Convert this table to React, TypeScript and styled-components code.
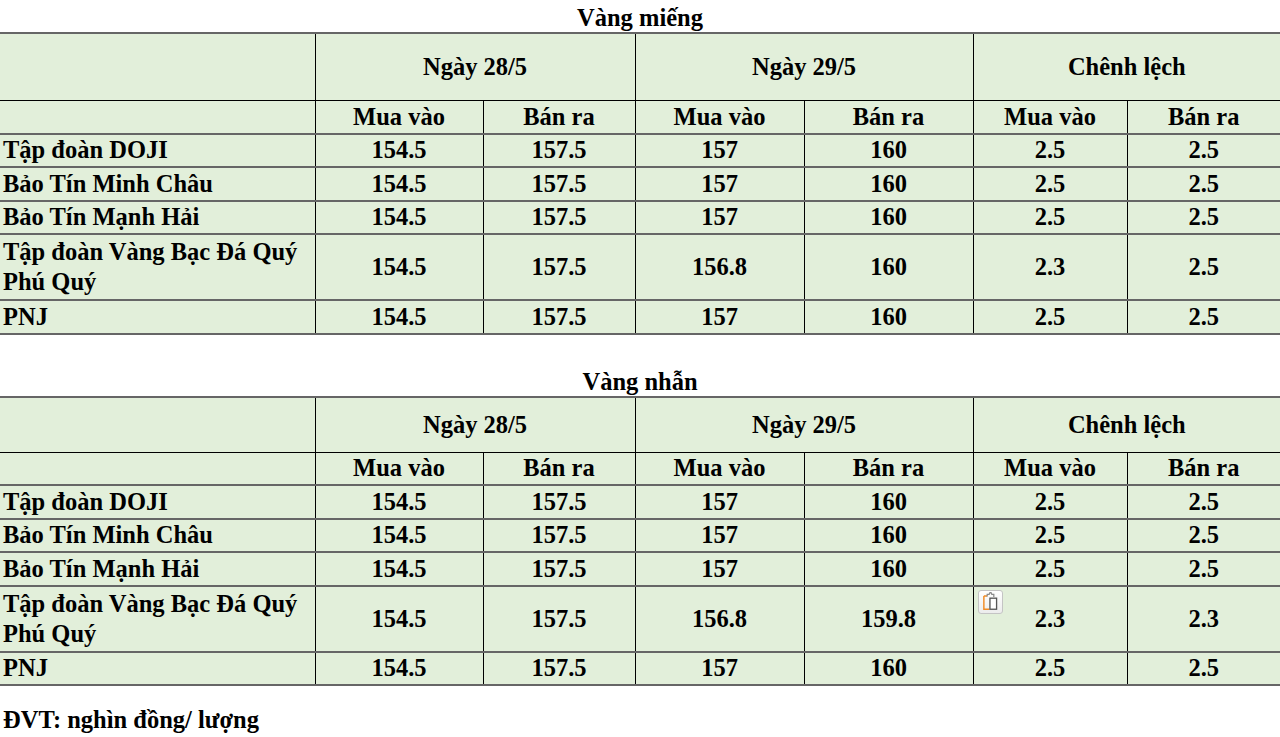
import React from 'react';
import styled, { createGlobalStyle } from 'styled-components';

const GlobalStyle = createGlobalStyle`
  html, body {
    margin: 0;
    padding: 0;
    background: #ffffff;
  }
  body {
    font-family: "Liberation Serif", "Times New Roman", serif;
    font-weight: bold;
    font-size: 24.5px;
    color: #000;
  }
`;

interface PriceRow {
  name: string;
  buy28: string;
  sell28: string;
  buy29: string;
  sell29: string;
  diffBuy: string;
  diffSell: string;
  tall?: boolean;
  pasteIcon?: boolean;
}

const Page = styled.div`
  width: 1280px;
  display: flex;
  flex-direction: column;
`;

const Section = styled.section<{ $gap: number }>`
  margin-top: ${p => p.$gap}px;
`;

const Title = styled.div`
  height: 32px;
  box-sizing: border-box;
  padding-top: 5px;
  line-height: 26px;
  text-align: center;
`;

const Table = styled.table`
  width: 1280px;
  border-collapse: collapse;
  table-layout: fixed;
  background: #e2efda;
`;

const Cell = styled.td<{ $left?: boolean; $h?: number }>`
  position: relative;
  height: ${p => (p.$h ? `${p.$h}px` : 'auto')};
  padding: 0 ${p => (p.$left ? '3px' : '0')};
  text-align: ${p => (p.$left ? 'left' : 'center')};
  vertical-align: middle;
  line-height: 30px;
  border-top: 2px solid #666666;
  border-bottom: 2px solid #666666;
  border-left: 1px solid #000;
  border-right: 1px solid #000;
  &:first-child {
    border-left: none;
  }
  &:last-child {
    border-right: none;
  }
`;

const TopHead = styled(Cell)`
  border-bottom: 1px solid #000;
`;

const SubHead = styled(Cell)`
  border-top: 1px solid #000;
`;

const PasteButton = styled.span`
  position: absolute;
  left: 4px;
  top: 3px;
  width: 25px;
  height: 24px;
  box-sizing: border-box;
  border: 1px solid #c4c4c4;
  border-radius: 3px;
  background: linear-gradient(#ffffff, #ececec);
  display: flex;
  align-items: center;
  justify-content: center;
`;

const Note = styled.div`
  margin-top: 21px;
  padding-left: 3px;
  line-height: 26px;
`;

const PasteIcon = () => (
  <PasteButton>
    <svg width="21" height="21" viewBox="0 0 19 19">
      <path d="M3.5 4.5 H6.5 M3.5 4.5 V16.5 H8.5" fill="none" stroke="#f08a24" strokeWidth="1.3" />
      <path d="M6.5 5 V3 H8.3 L9 1.5 H10 L10.7 3 H12.5 V5.5" fill="none" stroke="#8a8a8a" strokeWidth="1.1" />
      <rect x="9" y="6.5" width="6" height="10" fill="#ffffff" stroke="#555" strokeWidth="1.2" />
    </svg>
  </PasteButton>
);

const widths = [315, 168, 152, 169, 169, 154, 153];

const PriceTable: React.FC<{ title: string; rows: PriceRow[]; headH: number; gap: number }> = ({ title, rows, headH, gap }) => (
  <Section $gap={gap}>
    <Title>{title}</Title>
    <Table>
      <colgroup>
        {widths.map((w, i) => (
          <col key={i} style={{ width: w }} />
        ))}
      </colgroup>
      <thead>
        <tr>
          <TopHead as="th" $h={headH} />
          <TopHead as="th" colSpan={2}>Ngày 28/5</TopHead>
          <TopHead as="th" colSpan={2}>Ngày 29/5</TopHead>
          <TopHead as="th" colSpan={2}>Chênh lệch</TopHead>
        </tr>
        <tr>
          <SubHead as="th" $h={31.5} />
          <SubHead as="th">Mua vào</SubHead>
          <SubHead as="th">Bán ra</SubHead>
          <SubHead as="th">Mua vào</SubHead>
          <SubHead as="th">Bán ra</SubHead>
          <SubHead as="th">Mua vào</SubHead>
          <SubHead as="th">Bán ra</SubHead>
        </tr>
      </thead>
      <tbody>
        {rows.map(r => (
          <tr key={r.name}>
            <Cell $left $h={r.tall ? 64 : 31.5}>{r.name}</Cell>
            <Cell>{r.buy28}</Cell>
            <Cell>{r.sell28}</Cell>
            <Cell>{r.buy29}</Cell>
            <Cell>{r.sell29}</Cell>
            <Cell>
              {r.pasteIcon && <PasteIcon />}
              {r.diffBuy}
            </Cell>
            <Cell>{r.diffSell}</Cell>
          </tr>
        ))}
      </tbody>
    </Table>
  </Section>
);

const mieng: PriceRow[] = [
  { name: 'Tập đoàn DOJI', buy28: '154.5', sell28: '157.5', buy29: '157', sell29: '160', diffBuy: '2.5', diffSell: '2.5' },
  { name: 'Bảo Tín Minh Châu', buy28: '154.5', sell28: '157.5', buy29: '157', sell29: '160', diffBuy: '2.5', diffSell: '2.5' },
  { name: 'Bảo Tín Mạnh Hải', buy28: '154.5', sell28: '157.5', buy29: '157', sell29: '160', diffBuy: '2.5', diffSell: '2.5' },
  { name: 'Tập đoàn Vàng Bạc Đá Quý Phú Quý', buy28: '154.5', sell28: '157.5', buy29: '156.8', sell29: '160', diffBuy: '2.3', diffSell: '2.5', tall: true },
  { name: 'PNJ', buy28: '154.5', sell28: '157.5', buy29: '157', sell29: '160', diffBuy: '2.5', diffSell: '2.5' },
];

const nhan: PriceRow[] = [
  { name: 'Tập đoàn DOJI', buy28: '154.5', sell28: '157.5', buy29: '157', sell29: '160', diffBuy: '2.5', diffSell: '2.5' },
  { name: 'Bảo Tín Minh Châu', buy28: '154.5', sell28: '157.5', buy29: '157', sell29: '160', diffBuy: '2.5', diffSell: '2.5' },
  { name: 'Bảo Tín Mạnh Hải', buy28: '154.5', sell28: '157.5', buy29: '157', sell29: '160', diffBuy: '2.5', diffSell: '2.5' },
  { name: 'Tập đoàn Vàng Bạc Đá Quý Phú Quý', buy28: '154.5', sell28: '157.5', buy29: '156.8', sell29: '159.8', diffBuy: '2.3', diffSell: '2.3', tall: true, pasteIcon: true },
  { name: 'PNJ', buy28: '154.5', sell28: '157.5', buy29: '157', sell29: '160', diffBuy: '2.5', diffSell: '2.5' },
];

export default function App() {
  return (
    <Page>
      <GlobalStyle />
      <PriceTable title="Vàng miếng" rows={mieng} headH={66} gap={0} />
      <PriceTable title="Vàng nhẫn" rows={nhan} headH={54} gap={29} />
      <Note>ĐVT: nghìn đồng/ lượng</Note>
    </Page>
  );
}
